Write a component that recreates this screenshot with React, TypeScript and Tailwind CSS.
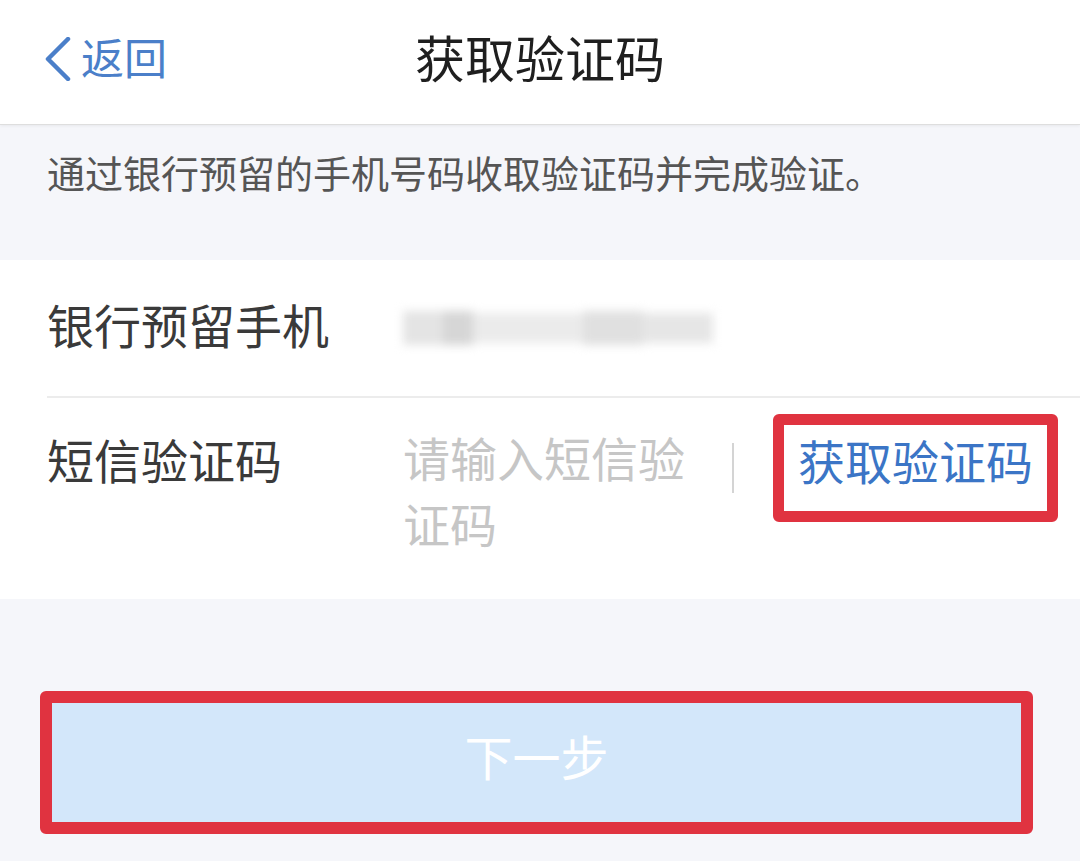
import React from 'react'

const font = { fontFamily: '"Noto Sans CJK SC", "Noto Sans", sans-serif' }

function BlurredPhone() {
  // masked phone number, shown blurred in the screenshot
  return (
    <div className="flex items-center h-[46px] w-[310px] blur-[5px]">
      <div className="h-[34px] w-[40px] bg-[#e4e4e4]" />
      <div className="h-[34px] w-[30px] bg-[#d6d6d6]" />
      <div className="h-[30px] w-[110px] bg-[#ebebeb]" />
      <div className="h-[34px] w-[60px] bg-[#e0e0e0]" />
      <div className="h-[30px] w-[70px] bg-[#e6e6e6]" />
    </div>
  )
}

export default function App() {
  return (
    <div className="w-[1080px] h-[861px] bg-[#f5f6fa] overflow-hidden" style={font}>
      {/* Nav bar */}
      <header className="h-[125px] pb-[12px] bg-white border-b border-[#dedede] shadow-[0_1px_3px_rgba(0,0,0,0.06)] grid grid-cols-[1fr_auto_1fr] items-center">
        <div className="flex items-center pl-[44px] text-[#4b7fc9]">
          <svg width="28" height="44" viewBox="0 0 28 44" fill="none" aria-hidden="true" className="mt-[6px]">
            <path d="M24 2 L4 22 L24 42" stroke="currentColor" strokeWidth="4.5" strokeLinecap="round" strokeLinejoin="round" />
          </svg>
          <span className="ml-[9px] text-[43px] leading-none">返回</span>
        </div>
        <h1 className="text-[50px] leading-none text-[#1f1f1f]">获取验证码</h1>
        <div />
      </header>

      {/* Hint */}
      <div className="h-[135px] pt-[21px] px-[47px]">
        <p className="text-[38px] leading-[52px] text-[#555]">通过银行预留的手机号码收取验证码并完成验证。</p>
      </div>

      {/* Form */}
      <div className="bg-white">
        <div className="h-[136px] flex items-center px-[47px]">
          <span className="w-[356px] mb-[10px] text-[47px] leading-none text-[#3a3a3a]">银行预留手机</span>
          <BlurredPhone />
        </div>
        <div className="ml-[47px] h-[2px] bg-[#ececec]" />
        <div className="h-[201px] flex items-start pt-[16px] pl-[47px]">
          <span className="w-[356px] mt-[11px] text-[47px] leading-[67px] text-[#3a3a3a]">短信验证码</span>
          <span className="w-[300px] mt-[10px] text-[47px] leading-[66px] text-[#c6c6c6]">请输入短信验证码</span>
          <div className="ml-[29px] mt-[29px] w-[2px] h-[50px] bg-[#d4d4d4]" />
          <div className="ml-[39px] w-[285px] h-[108px] border-[11px] border-[#e03340] rounded-[6px] flex items-center justify-center pb-[18px]">
            <span className="text-[47px] leading-none text-[#3b75c6]">获取验证码</span>
          </div>
        </div>
      </div>

      {/* Next button */}
      <div className="pt-[92px] px-[40px]">
        <button className="w-[993px] h-[143px] border-[12px] border-[#e03340] rounded-[6px] bg-[#d3e7fa] flex items-center justify-center pb-[16px]">
          <span className="text-[48px] leading-none text-white">下一步</span>
        </button>
      </div>
    </div>
  )
}
